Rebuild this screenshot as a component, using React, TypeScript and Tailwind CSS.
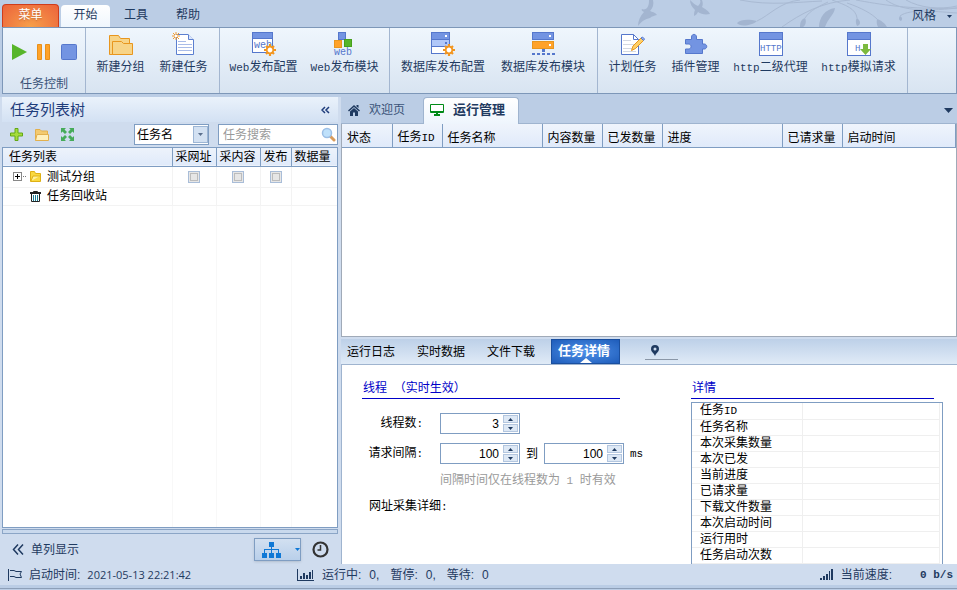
import React from 'react';

const SKY = '#bbcde5';

/** Latin runs sit on a half-width grid next to the 12px CJK glyphs. */
const Txt: React.FC<{ children: string }> = ({ children }) => (
  <>
    {children.split(/([\x20-\x7e]+)/).map((part, i) =>
      i % 2 ? (
        <span key={i} className="font-['Liberation_Mono',monospace] text-[11px]">{part}</span>
      ) : (
        part
      ),
    )}
  </>
);

/* ---------- icons ---------- */

const FolderBig = () => (
  <svg width="24" height="24" viewBox="0 0 24 24" fill="#f7d488" stroke="#e8961e">
    <path d="M.5 22.5V3.5H9.5L11.5 6.5H20.5V22.5Z" />
    <path d="M3.5 22.5V9.5H12.5L14.5 11.5H23.5V22.5Z" />
  </svg>
);

const NewDoc = () => (
  <svg width="24" height="24" viewBox="0 0 24 24" fill="none">
    <path d="M4.5 2.5H16L21.5 8V22.5H4.5Z" fill="#fff" stroke="#5b7fd0" />
    <path d="M16.5 2.5V7.5H21.5" stroke="#5b7fd0" fill="#dbe6fb" />
    <path d="M6 9.5H14M6 12.5H20M6 15.5H20M6 18.5H20" stroke="#a9bce8" />
    <path d="M4 0V8M0 4H8M1 1L7 7M7 1L1 7" stroke="#f29a2e" />
    <rect x="3" y="3" width="2" height="2" fill="#fff" />
  </svg>
);

const Gear = ({ x, y }: { x: number; y: number }) => (
  <g transform={`translate(${x} ${y})`}>
    <path d="M0-6V6M-6 0H6M-4-4L4 4M4-4L-4 4" stroke="#f2951f" strokeWidth="2.2" />
    <circle r="3.3" fill="#fff" stroke="#f2951f" strokeWidth="1.8" />
  </g>
);

const WebConfig = () => (
  <svg width="24" height="24" viewBox="0 0 24 24">
    <rect x=".5" y=".5" width="20" height="20" fill="#fff" stroke="#5577cc" />
    <rect x="1" y="1" width="19" height="5" fill="#7394e2" />
    <path d="M0 6.5H21" stroke="#5577cc" />
    <text x="2" y="16" fontSize="10" fontFamily="Liberation Mono, monospace" fill="#5577cc">web</text>
    <Gear x={18} y={18} />
  </svg>
);

const WebModule = () => (
  <svg width="24" height="24" viewBox="0 0 24 24" className="overflow-visible">
    <rect x="5.5" y=".5" width="7" height="7" fill="#7394e2" stroke="#5577cc" />
    <rect x="1.5" y="8.5" width="7" height="7" fill="#ffa229" stroke="#e8961e" />
    <rect x="11.5" y="7.5" width="7" height="7" fill="#57b52a" stroke="#46a01c" />
    <text x="1" y="23" fontSize="10" fontFamily="Liberation Mono, monospace" fill="#5577cc">web</text>
  </svg>
);

const DbConfig = () => (
  <svg width="24" height="24" viewBox="0 0 24 24">
    <rect x=".5" y=".5" width="18" height="21" fill="#fff" stroke="#5577cc" />
    <rect x="1" y="1" width="17" height="6" fill="#7394e2" />
    <rect x="1" y="8" width="17" height="6" fill="#b0c7f8" />
    <path d="M0 7.5H19M0 14.5H19" stroke="#5577cc" />
    <path d="M14 3H16V5H14Z" fill="#fff" />
    <path d="M14 10H16V12H14Z" fill="#5577cc" />
    <Gear x={18} y={18} />
  </svg>
);

const DbModule = () => (
  <svg width="24" height="24" viewBox="0 0 24 24">
    <rect x="1.5" y=".5" width="21" height="7" fill="#7394e2" stroke="#5577cc" />
    <rect x="1.5" y="9.5" width="21" height="7" fill="#ffa229" stroke="#e8961e" />
    <path d="M18 3H20V5H18ZM18 12H20V14H18Z" fill="#fff" />
    <path d="M11 17H14V20H11ZM1 21H4V23H1ZM6 21H9V23H6ZM11 21H14V23H11ZM16 21H19V23H16ZM21 21H24V23H21Z" fill="#5577cc" />
  </svg>
);

const PlanIcon = () => (
  <svg width="24" height="24" viewBox="0 0 24 24" fill="none">
    <path d="M.5 2.5H12.5L17.5 7.5V22.5H.5Z" fill="#fff" stroke="#5577cc" />
    <path d="M12.5 2.5V7.5H17.5" stroke="#5577cc" />
    <path d="M2 8.5H10M2 12.5H15M2 16.5H15M2 19.5H15" stroke="#d3d8e2" />
    <path d="M10.5 18.5L12 14L20 6L22.5 8.5L14.5 16.5Z" fill="#ffd067" stroke="#e8961e" />
    <path d="M20 6L21.5 5L23.5 7L22.5 8.5Z" fill="#9db8f0" stroke="#5577cc" />
  </svg>
);

const PluginIcon = () => (
  <svg width="24" height="24" viewBox="0 0 24 24">
    <path
      d="M1.5 7.5H7.5V5C7.5 1.5 12.5 1.5 12.5 5V7.5H18.5V12H20.5C23.5 12.5 23.5 16.5 20.5 17H18.5V21.5H1.5V17H4C8 17.5 8 11.5 4 12H1.5Z"
      fill="#7394e2"
      stroke="#5577cc"
    />
  </svg>
);

const HttpWin = ({ label, arrow }: { label: string; arrow?: boolean }) => (
  <svg width="24" height="24" viewBox="0 0 24 24">
    <rect x=".5" y=".5" width="23" height="23" fill="#fff" stroke="#5577cc" />
    <rect x="1" y="1" width="22" height="6" fill="#7394e2" />
    <path d="M0 7.5H24" stroke="#5577cc" />
    <text x={arrow ? 8 : 1} y="19" fontSize="9" fontFamily="Liberation Mono, monospace" fill="#5577cc">{label}</text>
    {arrow && <path d="M16 12H21V17H24L18.5 23L13 17H16Z" fill="#7cba3d" />}
  </svg>
);

/** Floral branches and birds behind the tab strip. */
const SkyArt = () => (
  <svg className="absolute right-0 top-0" width="347" height="27" viewBox="0 0 347 27" fill="none" stroke="#a9bad3">
    <g fill="#a3b5d0" stroke="none">
      <path d="M39 0H43C44 4 43 8 40 11C42 12 45 12 47 15C44 16 42 16 40 18C35 19 32 21 28 26C28 21 30 16 34 12C32 11 31 10 32 9C34 10 36 9 37 8C39 5 39 3 39 0Z" />
      <path d="M80 0C83 3 85 5 88 6C90 4 91 2 90 0H92C93 3 93 5 92 7C95 9 99 11 100 14C95 15 91 14 88 12C87 14 86 15 84 16C84 14 84 12 85 10C82 7 80 4 80 0Z" />
      <path d="M127 23C131 19 139 19 147 21C142 26 129 27 127 23Z" />
      <path d="M190 27C190 21 192 19 195 18C197 22 195 26 193 27Z" />
      <path d="M209 27C209 18 215 9 225 8C224 15 218 18 215 27Z" />
      <path d="M247 26C245 22 246 19 247 18C251 21 251 25 247 26Z" />
      <path d="M268 27C266 23 267 20 267 19C273 21 276 25 277 27Z" />
      <path d="M290 16C292 17 293 19 291 21C288 20 289 17 290 16Z" />
    </g>
    <path d="M147 21C160 15 170 2 190 0M195 18C200 10 210 6 218 2M130 0C160 6 188 2 212 1M172 27C190 14 212 2 240 0M222 0C236 5 246 9 247 18M246 0C268 4 300 10 347 8M237 3C252 8 262 14 267 19M276 0C290 10 312 12 347 8M296 0C310 8 330 10 347 6M290 16C300 8 330 12 347 13" />
  </svg>
);

/* ---------- ribbon ---------- */

type Tool = { label: string; icon: React.ReactNode; width: string };

const TOOL_GROUPS: Tool[][] = [
  [
    { label: '新建分组', icon: <FolderBig />, width: 'w-[63px]' },
    { label: '新建任务', icon: <NewDoc />, width: 'w-[63px]' },
  ],
  [
    { label: 'Web发布配置', icon: <WebConfig />, width: 'w-[81px]' },
    { label: 'Web发布模块', icon: <WebModule />, width: 'w-[81px]' },
  ],
  [
    { label: '数据库发布配置', icon: <DbConfig />, width: 'w-[100px]' },
    { label: '数据库发布模块', icon: <DbModule />, width: 'w-[100px]' },
  ],
  [
    { label: '计划任务', icon: <PlanIcon />, width: 'w-[63px]' },
    { label: '插件管理', icon: <PluginIcon />, width: 'w-[63px]' },
    { label: 'http二级代理', icon: <HttpWin label="HTTP" />, width: 'w-[87px]' },
    { label: 'http模拟请求', icon: <HttpWin label="H" arrow />, width: 'w-[89px]' },
  ],
];

const Ribbon = () => (
  <section className="flex h-[67px] shrink-0 border border-[#7d97b8] bg-linear-to-b from-[#eff6fd] to-[#d8e4f1] ml-[2px]">
    <div className="w-[83px] shrink-0 border-r border-[#a3b6d0] flex flex-col items-center">
      <div className="flex items-center gap-[9px] pt-4">
        <button type="button" aria-label="开始任务">
          <svg width="16" height="16" viewBox="0 0 16 16"><path d="M1 0L16 8L1 16Z" fill="#57b52a" /></svg>
        </button>
        <button type="button" aria-label="暂停任务">
          <svg width="16" height="16" viewBox="0 0 16 16" fill="#ffa229" stroke="#e8901a">
            <path d="M1.5.5H5.5V15.5H1.5ZM9.5.5H13.5V15.5H9.5Z" />
          </svg>
        </button>
        <button type="button" aria-label="停止任务">
          <svg width="16" height="16" viewBox="0 0 16 16"><rect x=".5" y=".5" width="15" height="15" rx="1" fill="#7394e2" stroke="#5577cc" /></svg>
        </button>
      </div>
      <span className="mt-auto text-[#3a5378]">任务控制</span>
    </div>
    {TOOL_GROUPS.map((group, i) => (
      <div key={i} className="flex shrink-0 border-r border-[#a3b6d0] pl-[3px] pr-1">
        {group.map((tool) => (
          <button key={tool.label} type="button" className={`${tool.width} flex flex-col items-center pt-1`}>
            {tool.icon}
            <span className="mt-[2px] whitespace-nowrap"><Txt>{tool.label}</Txt></span>
          </button>
        ))}
      </div>
    ))}
  </section>
);

/* ---------- left panel ---------- */

const Tick = ({ label }: { label: string }) => (
  <input
    type="checkbox"
    aria-label={label}
    className="block mx-auto size-3 appearance-none border border-[#a9bdd8] bg-[#e6e6e6] outline outline-1 -outline-offset-3 outline-[#bcbcbc]"
  />
);

const TaskTree = () => (
  <aside className="flex w-[336px] shrink-0 flex-col">
    <div className="flex h-[25px] shrink-0 items-center justify-between bg-linear-to-b from-[#eaf2fb] to-[#d3e1f3] pl-2 pr-2">
      <h2 className="text-[15px] text-[#1e3c7b]">任务列表树</h2>
      <button type="button" aria-label="收起" className="text-[#1e3c7b]">
        <svg width="9" height="8" viewBox="0 0 9 8" fill="none" stroke="currentColor" strokeWidth="1.5"><path d="M4 1L1 4L4 7M8 1L5 4L8 7" /></svg>
      </button>
    </div>
    <div className="flex h-[25px] shrink-0 items-center">
      <div className="flex flex-1 items-center gap-3 pl-2">
        <button type="button" aria-label="添加">
          <svg width="13" height="13" viewBox="0 0 13 13"><path d="M5 .5H8V5H12.5V8H8V12.5H5V8H.5V5H5Z" fill="#a6dc3c" stroke="#62a816" /></svg>
        </button>
        <button type="button" aria-label="添加分组">
          <svg width="14" height="12" viewBox="0 0 14 12" stroke="#e2b04e"><path d="M.5 11.5V.5H5L6.5 2H12.5V5" fill="#f3ca70" /><path d="M.5 11.5L2 5.5H13.5V11.5Z" fill="#fff0bd" /></svg>
        </button>
        <button type="button" aria-label="展开">
          <svg width="13" height="13" viewBox="0 0 13 13" fill="#46ab59"><path d="M0 0H5L3.5 1.5L6 4L4 6L1.5 3.5L0 5ZM13 0V5L11.5 3.5L9 6L7 4L9.5 1.5L8 0ZM0 13V8L1.5 9.5L4 7L6 9L3.5 11.5L5 13ZM13 13H8L9.5 11.5L7 9L9 7L11.5 9.5L13 8Z" /></svg>
        </button>
      </div>
      <div className="relative w-[75px] h-[21px]">
        <select aria-label="搜索字段" className="h-full w-full appearance-none border border-[#7f9dc2] bg-white pl-[2px] text-black">
          <option>任务名</option>
        </select>
        <span className="pointer-events-none absolute right-px top-[2px] flex h-[17px] w-[15px] items-center justify-center border border-[#9db6d5] bg-[#d3e1f2]">
          <svg width="5" height="3"><path d="M0 0H5L2.5 3Z" fill="#5b6f8d" /></svg>
        </span>
      </div>
      <label className="ml-[9px] flex h-[21px] w-[120px] items-center border border-[#7f9dc2] bg-white pl-1 pr-px">
        <input type="text" aria-label="任务搜索" placeholder="任务搜索" className="w-full min-w-0 outline-none placeholder:text-[#9a9a9a]" />
        <svg className="shrink-0" width="15" height="15" viewBox="0 0 15 15"><path d="M9 9L13 13" stroke="#d99c5c" strokeWidth="3" strokeLinecap="round" /><circle cx="6" cy="6" r="4.5" fill="#bfe1fb" stroke="#9cbfe6" strokeWidth="1.5" /></svg>
      </label>
    </div>
    <div className="flex min-h-0 flex-1 flex-col border border-[#7f9dc2] bg-white">
      <table className="w-full table-fixed border-collapse text-black">
        <colgroup>
          <col /><col className="w-[44px]" /><col className="w-[44px]" /><col className="w-[31px]" /><col className="w-[46px]" />
        </colgroup>
        <thead>
          <tr className="h-[18px] border-b border-[#7f9dc2] bg-linear-to-b from-[#edf3fb] to-[#e0eafa]">
            {['任务列表', '采网址', '采内容', '发布', '数据量'].map((name, i) => (
              <th key={name} className={`border-r border-[#7f9dc2] p-0 text-left font-normal whitespace-nowrap leading-4 last:border-r-0 ${i ? 'pl-[3px]' : 'pl-[6px]'}`}>{name}</th>
            ))}
          </tr>
        </thead>
        <tbody>
          <tr className="h-[21px] border-b border-[#f3f3f3]">
            <td className="border-r border-[#f3f3f3] p-0">
              <div className="flex items-center pl-[10px]">
                <svg width="14" height="9" viewBox="0 0 14 9" fill="none"><rect x=".5" y=".5" width="8" height="8" stroke="#888" /><path d="M2 4.5H7M4.5 2V7" stroke="#000" /><path d="M10 4.5H14" stroke="#777" strokeDasharray="1 1" /></svg>
                <svg className="ml-[3px] mr-[6px]" width="11" height="11" viewBox="0 0 11 11" stroke="#deb015"><path d="M.5 10.5V.5H4.5L5.5 2.5H10.5V10.5Z" fill="#fad93f" /><path d="M1 10L3 5H10" fill="#fff29c" /></svg>
                测试分组
              </div>
            </td>
            <td className="border-r border-[#f3f3f3] p-0"><Tick label="采网址" /></td>
            <td className="border-r border-[#f3f3f3] p-0"><Tick label="采内容" /></td>
            <td className="border-r border-[#f3f3f3] p-0"><Tick label="发布" /></td>
            <td />
          </tr>
          <tr className="h-[18px] border-b border-[#f3f3f3]">
            <td className="border-r border-[#f3f3f3] p-0">
              <div className="flex h-[17px] items-center pl-[27px]">
                <svg className="mr-[6px]" width="11" height="11" viewBox="0 0 11 11" fill="none" stroke="#222"><path d="M0 2H11" strokeWidth="2" /><path d="M3.5 1.5V.5H7.5V1.5M1.5 3V10.5H9.5V3" /><path d="M3.5 4V10M5.5 4V10M7.5 4V10" stroke="#1b7f96" /></svg>
                任务回收站
              </div>
            </td>
            <td className="border-r border-[#f3f3f3]" />
            <td className="border-r border-[#f3f3f3]" />
            <td className="border-r border-[#f3f3f3]" />
            <td />
          </tr>
        </tbody>
      </table>
      <div className="flex flex-1">
        <div className="flex-1 border-r border-[#f8f8f8]" />
        <div className="w-[44px] border-r border-[#f8f8f8]" />
        <div className="w-[44px] border-r border-[#f8f8f8]" />
        <div className="w-[31px] border-r border-[#f8f8f8]" />
        <div className="w-[45px]" />
      </div>
    </div>
    <div className="my-px h-[5px] shrink-0 border border-[#8ba5c6] bg-[#c9d9ed]" />
    <div className="flex h-[29px] shrink-0 items-center pl-[10px] pr-[9px] text-[#1f3a60]">
      <button type="button" className="flex items-center gap-[7px]">
        <svg width="12" height="11" viewBox="0 0 12 11" fill="none" stroke="currentColor" strokeWidth="1.5"><path d="M6 .5L1.5 5.5L6 10.5M11 .5L6.5 5.5L11 10.5" /></svg>
        单列显示
      </button>
      <button type="button" aria-label="分组视图" className="ml-auto flex h-[23px] w-[47px] items-center border border-[#7f9dc2] bg-linear-to-b from-[#d2e0f1] to-[#b9cfea] pl-[7px] shadow-sm">
        <svg width="19" height="16" viewBox="0 0 19 16" fill="#0f78d6"><path d="M7 0H12V5H10V7H17V11H19V16H14V11H16V8H10V11H12V16H7V11H9V8H3V11H5V16H0V11H2V7H9V5H7Z" /></svg>
        <svg className="ml-auto" width="5" height="3"><path d="M0 0H5L2.5 3Z" fill="#0f78d6" /></svg>
      </button>
      <button type="button" aria-label="定时" className="ml-[11px]">
        <svg width="17" height="17" viewBox="0 0 17 17" fill="none" stroke="#333"><circle cx="8.5" cy="8.5" r="7" strokeWidth="2.2" /><path d="M8.5 4V9H5.5" strokeWidth="1.5" /></svg>
      </button>
    </div>
  </aside>
);

/* ---------- right side ---------- */

const RunTable = () => (
  <div className="h-[213px] shrink-0 border-x border-b border-[#a0aab8] bg-white">
    <table className="w-full table-fixed border-collapse text-black">
      <colgroup>
        <col className="w-[50px]" /><col className="w-[50px]" /><col className="w-[100px]" /><col className="w-[60px]" />
        <col className="w-[60px]" /><col className="w-[120px]" /><col className="w-[60px]" /><col />
      </colgroup>
      <thead>
        <tr className="h-[23px] border-b border-[#7f9dc2] bg-linear-to-b from-[#eff4fc] to-[#e0eafa]">
          {['状态', '任务ID', '任务名称', '内容数量', '已发数量', '进度', '已请求量', '启动时间'].map((name) => (
            <th key={name} className="border-r border-[#7f9dc2] p-0 pl-[5px] pt-1 text-left font-normal whitespace-nowrap"><Txt>{name}</Txt></th>
          ))}
        </tr>
      </thead>
    </table>
  </div>
);

const Spin: React.FC<{ id: string; value: string }> = ({ id, value }) => (
  <div className="flex h-[21px] w-20 shrink-0 border border-[#7f9dc2] bg-white p-px">
    <input id={id} defaultValue={value} className="w-full min-w-0 pr-1 text-right text-[12px] outline-none" />
    <div className="flex w-[15px] shrink-0 flex-col gap-px">
      <button type="button" aria-label="增加" className="flex flex-1 items-center justify-center border border-[#b3c6df] bg-[#dde8f5]">
        <svg width="5" height="3"><path d="M0 3H5L2.5 0Z" fill="#1f3a60" /></svg>
      </button>
      <button type="button" aria-label="减少" className="flex flex-1 items-center justify-center border border-[#b3c6df] bg-[#dde8f5]">
        <svg width="5" height="3"><path d="M0 0H5L2.5 3Z" fill="#1f3a60" /></svg>
      </button>
    </div>
  </div>
);

const DETAILS = ['任务ID', '任务名称', '本次采集数量', '本次已发', '当前进度', '已请求量', '下载文件数量', '本次启动时间', '运行用时', '任务启动次数', '本次触发数量'];

const DetailPane = () => (
  <div className="flex min-h-0 flex-1 overflow-hidden border-l border-t border-[#9fb4cf] bg-white pl-5 pr-[14px] pt-[13px] text-black">
    <form className="w-[258px] shrink-0">
      <h3 className="h-[21px] border-b border-[#0000c8] pl-px pt-px text-[#0000c8]"><Txt>线程 （实时生效）</Txt></h3>
      <div className="mt-[14px] flex items-center">
        <label htmlFor="threads" className="w-[78px] shrink-0 pr-[17px] text-right whitespace-nowrap"><Txt>线程数:</Txt></label>
        <Spin id="threads" value="3" />
      </div>
      <div className="mt-[9px] flex items-center">
        <label htmlFor="from" className="w-[78px] shrink-0 pr-[17px] text-right whitespace-nowrap"><Txt>请求间隔:</Txt></label>
        <Spin id="from" value="100" />
        <label htmlFor="to" className="w-6 shrink-0 text-center">到</label>
        <Spin id="to" value="100" />
        <span className="ml-[6px]"><Txt>ms</Txt></span>
      </div>
      <p className="mt-[7px] pl-[78px] whitespace-nowrap text-[#9a9a9a]"><Txt>间隔时间仅在线程数为 1 时有效</Txt></p>
      <p className="mt-[7px] pl-[7px]"><Txt>网址采集详细:</Txt></p>
    </form>
    <div className="ml-auto w-[252px]">
      <h3 className="mr-[9px] h-[21px] border-b border-[#0000c8] pl-px pt-px text-[#0000c8]">详情</h3>
      <div className="mt-[3px] border border-[#7f9dc2] pr-[2px]">
        <table className="w-full table-fixed border-collapse">
          <colgroup><col className="w-[110px]" /><col /></colgroup>
          <tbody>
            {DETAILS.map((name) => (
              <tr key={name} className="h-4 border-b border-[#efefef]">
                <th scope="row" className="border-r border-[#efefef] p-0 pl-2 text-left font-normal leading-[15px] whitespace-nowrap"><Txt>{name}</Txt></th>
                <td className="border-r border-[#efefef] p-0" />
              </tr>
            ))}
          </tbody>
        </table>
      </div>
    </div>
  </div>
);

const Workspace = () => (
  <main className="flex min-w-0 flex-1 flex-col">
    <nav className="flex h-[27px] shrink-0 border-b border-[#9fb4cf] text-[13px] text-[#3a5378]" style={{ background: SKY }}>
      <button type="button" className="flex w-[82px] items-center gap-[9px] pl-[7px] text-[12px]">
        <svg width="12" height="11" viewBox="0 0 12 11" fill="#1f3a60"><path d="M6 0L12 5.5L11 6.5L6 2L1 6.5L0 5.5ZM8.5 0H10.5V3L8.5 1.5ZM2 6.5L6 3L10 6.5V11H7V7.5H5V11H2Z" /></svg>
        欢迎页
      </button>
      <button type="button" className="-mb-px flex w-[96px] items-center gap-[9px] rounded-t-sm border border-b-0 border-[#9fb4cf] bg-linear-to-b from-white to-[#eef5fd] pl-[6px] pb-[3px] font-bold text-[#1f3a60]">
        <svg width="14" height="12" viewBox="0 0 14 12"><path d="M.5.5H13.5V8.500H.5Z" fill="#fff" stroke="#008a17" /><path d="M1 7H13V9H1ZM6 9H8V10H10V12H4V10H6Z" fill="#008a17" /></svg>
        运行管理
      </button>
      <button type="button" aria-label="标签列表" className="ml-auto mr-1">
        <svg width="9" height="5"><path d="M0 0H9L4.5 5Z" fill="#1f3a60" /></svg>
      </button>
    </nav>
    <RunTable />
    <nav className="mt-[2px] flex h-[25px] shrink-0 items-center bg-linear-to-b from-[#bdd0e8] to-[#e0ebf7] text-black">
      <button type="button" className="w-[70px] pl-[6px] text-left">运行日志</button>
      <button type="button" className="w-[70px] pl-[6px] text-left">实时数据</button>
      <button type="button" className="w-[70px] pl-[6px] text-left">文件下载</button>
      <button type="button" className="relative h-full w-[69px] border border-[#1a4f9f] bg-radial from-[#4f92ea] to-[#1e5cba] pr-[3px] pb-[2px] text-[13px] font-bold text-white">
        任务详情
        <svg className="absolute bottom-0 left-7" width="12" height="5"><path d="M0 5L6 0L12 5Z" fill="#fff" /></svg>
      </button>
      <button type="button" aria-label="定位" className="ml-[25px] flex w-[33px] self-end border-b border-[#8a97a8] pb-[3px] pl-[6px] mb-[4px]">
        <svg width="8" height="11" viewBox="0 0 8 11"><path d="M4 11C3 8 0 7 0 4A4 4 0 0 1 8 4C8 7 5 8 4 11ZM4 2.5A1.5 1.5 0 1 0 4 5.5A1.5 1.5 0 1 0 4 2.5Z" fill="#1f3a60" fillRule="evenodd" /></svg>
      </button>
    </nav>
    <DetailPane />
  </main>
);

const Count = ({ label, value }: { label: string; value: string }) => (
  <span>{label}:<span className="ml-2">{value}</span></span>
);

const StatusBar = () => (
  <footer className="flex h-[21px] shrink-0 items-center bg-[#cfdcee] pl-2 pr-1 text-[#1f3a60]">
    <div className="flex w-[289px] items-center gap-[7px]">
      <svg width="14" height="12" viewBox="0 0 14 12" fill="none" stroke="#1f3a60"><path d="M.5 0V12M2 1.5H6L8 2.5H13.5L12 5L13.5 8.5H8L6 7.5H2" /></svg>
      <span>启动时间:</span>
      <span className="font-['Open_Sans',sans-serif] text-[11px]">2021-05-13 22:21:42</span>
    </div>
    <svg width="17" height="12" viewBox="0 0 17 12" fill="#1f3a60"><path d="M0 0H1V11H17V12H0ZM3 7H5V10H3ZM6 4H8V10H6ZM9 6H11V10H9ZM12 3H14V10H12ZM15 1H16V10H15Z" /></svg>
    <div className="ml-2 flex items-center gap-[11px]">
      <Count label="运行中" value="0," />
      <Count label="暂停" value="0," />
      <Count label="等待" value="0" />
    </div>
    <div className="ml-auto flex items-center gap-2">
      <svg width="13" height="11" viewBox="0 0 13 11" fill="#1f3a60"><path d="M0 9H2V11H0ZM3 7H5V11H3ZM6 5H8V11H6ZM9 2H10V11H9ZM11 0H13V11H11Z" /></svg>
      <span>当前速度:</span>
      <b className="ml-5 font-['Liberation_Mono',monospace] text-[11px] whitespace-pre">0 b/s</b>
    </div>
  </footer>
);

export default function App() {
  return (
    <div
      className="flex h-screen flex-col overflow-hidden font-['Liberation_Sans','Noto_Sans_CJK_SC',sans-serif] text-[12px] leading-[18px] text-[#1f3a60]"
      style={{ background: SKY }}
    >
      <header className="relative flex h-[27px] shrink-0 items-end pl-[2px]">
        <SkyArt />
        <button type="button" className="h-[23px] w-[57px] rounded-t-sm border border-b-0 border-[#cf3d1c] bg-radial-[at_50%_100%] from-[#f7a04a] to-[#ec633b] pb-[2px] text-white text-shadow-sm">菜单</button>
        <button type="button" className="ml-[2px] h-[22px] w-[49px] rounded-t-sm bg-linear-to-b from-white to-[#eff6fd] pb-[2px]">开始</button>
        <button type="button" className="h-[22px] w-[52px] pb-[2px]">工具</button>
        <button type="button" className="h-[22px] w-[52px] pb-[2px]">帮助</button>
        <button type="button" className="relative ml-auto mr-[5px] flex h-[22px] items-center gap-[11px]">
          风格
          <svg width="5" height="3"><path d="M0 0H5L2.5 3Z" fill="#1f3a60" /></svg>
        </button>
      </header>
      <Ribbon />
      <div className="mt-[3px] flex min-h-0 flex-1 gap-[3px] bg-[#cfdcee] pl-[2px]">
        <TaskTree />
        <Workspace />
      </div>
      <StatusBar />
      <div className="h-1 shrink-0 border-b border-[#8d9fb8] mb-px" />
    </div>
  );
}
